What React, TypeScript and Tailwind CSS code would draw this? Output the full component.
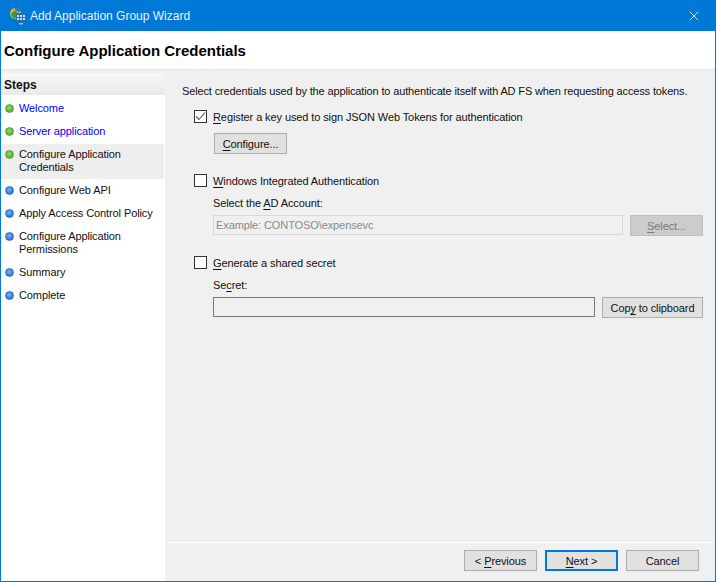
import type { ReactNode } from 'react'
import { X } from 'lucide-react'

const font = "font-['Liberation_Sans',Arial,sans-serif]"

const steps = [
  { label: ['Welcome'], state: 'done', link: true },
  { label: ['Server application'], state: 'done', link: true },
  { label: ['Configure Application', 'Credentials'], state: 'done', active: true },
  { label: ['Configure Web API'], state: 'todo' },
  { label: ['Apply Access Control Policy'], state: 'todo' },
  { label: ['Configure Application', 'Permissions'], state: 'todo' },
  { label: ['Summary'], state: 'todo' },
  { label: ['Complete'], state: 'todo' },
]

function Key({ children }: { children: ReactNode }) {
  return <span className="underline decoration-1 underline-offset-2">{children}</span>
}

function WinButton({
  children,
  className = 'border border-[#adadad] bg-[#e1e1e1] text-[#111]',
  width = 'w-[73px]',
}: {
  children: ReactNode
  className?: string
  width?: string
}) {
  return (
    <button
      type="button"
      className={`flex h-[21px] items-center justify-center pt-[2px] text-[11px] leading-none tracking-[-0.1px] ${width} ${className}`}
    >
      {children}
    </button>
  )
}

function CheckRow({ checked, children }: { checked?: boolean; children: ReactNode }) {
  return (
    <div className="flex h-[13px] items-center gap-[6px] leading-none">
      <span className="flex size-[13px] shrink-0 items-center justify-center border border-[#333] bg-white">
        {checked && (
          <svg width="11" height="11" viewBox="0 0 11 11" fill="none">
            <path d="M1 5.5 L4 8.5 L10 1.5" stroke="#5a5a5a" strokeWidth="1.1" />
          </svg>
        )}
      </span>
      <span className="pt-[2px]">{children}</span>
    </div>
  )
}

function AppIcon() {
  return (
    <svg width="18" height="18" viewBox="0 0 18 18" className="shrink-0">
      <circle cx="6.5" cy="6.5" r="5.5" fill="#e8b53a" />
      <path d="M2 7 Q4 3 7 4 L9 7 L6 12 Q3 11 2 7 Z" fill="#3f9a45" />
      <path d="M6 1 Q10 1 12 4 L9 5 L6 3 Z" fill="#2f6fb5" />
      <rect x="7" y="6" width="10" height="10" fill="#1f70b8" />
      <path d="M8 8h2v2H8zM11 8h2v2h-2zM14 8h2v2h-2zM8 11h2v2H8zM11 11h2v2h-2zM14 11h2v2h-2z" fill="#cfe6f7" />
      <rect x="10" y="16" width="4" height="1.5" fill="#8fbfe0" />
    </svg>
  )
}

function StepDot({ state }: { state: string }) {
  const cls =
    state === 'done'
      ? 'border-[#5aa83c] bg-[radial-gradient(circle_at_45%_40%,#9fdc6e,#4cab2c_70%)]'
      : 'border-[#2f72c9] bg-[radial-gradient(circle_at_45%_40%,#7fb4f2,#2a73dc_70%)]'
  return <span className={`size-[9px] shrink-0 rounded-full border ${cls}`} />
}

export default function App() {
  return (
    <div className={`flex h-[582px] w-[716px] flex-col overflow-hidden border border-t-0 border-[#0078d7] bg-white text-[#111] ${font}`}>
      <header className="flex h-[31px] shrink-0 items-center bg-[#0078d7] pl-2 pr-[13px] text-white">
        <AppIcon />
        <span className="ml-[3px] flex-1 text-[12px] text-[#e8f2fb]">Add Application Group Wizard</span>
        <X className="size-[16px]" strokeWidth={1.2} />
      </header>

      <div className="flex h-[39px] shrink-0 items-center border-b border-[#e4e4e4] pt-[3px] pl-[3px] text-[15px] font-bold text-black">
        Configure Application Credentials
      </div>

      <div className="flex min-h-0 flex-1 bg-[#f0f0f0] pt-[3px]">
        <aside className="w-[164px] shrink-0 bg-white">
          <div className="flex h-[22px] items-center bg-linear-to-b from-[#f7f7f7] to-[#e9e9e9] pt-[2px] pl-[3px] text-[12px] font-bold">
            Steps
          </div>
          <ul className="pt-[2px] pr-[1px] text-[11px] leading-[13px] tracking-[-0.1px]">
            {steps.map((step) => (
              <li
                key={step.label.join(' ')}
                className={`flex gap-[5px] pl-1 ${step.active ? 'bg-[#eeeeee] pt-[4px] pb-[5px] mt-[1px]' : 'py-[5px]'}`}
              >
                <span className="flex h-[13px] items-center">
                  <StepDot state={step.state} />
                </span>
                <span className={step.link ? 'text-[#0000ff]' : 'text-[#111]'}>
                  {step.label.map((line) => (
                    <span key={line} className="block">
                      {line}
                    </span>
                  ))}
                </span>
              </li>
            ))}
          </ul>
        </aside>

        <main className="ml-[3px] flex min-w-0 flex-1 flex-col bg-[#f0f0f0]">
          <div className="min-h-0 flex-1 pl-[14px] pt-[12px] pr-[12px] text-[11px] leading-none tracking-[-0.1px]">
            <p className="flex h-[13px] items-center whitespace-nowrap tracking-[-0.14px]">
              Select credentials used by the application to authenticate itself with AD FS when requesting access tokens.
            </p>

            <div className="mt-[12px] pl-[12px]">
              <CheckRow checked>
                <Key>R</Key>egister a key used to sign JSON Web Tokens for authentication
              </CheckRow>
              <div className="mt-[10px] ml-[20px]">
                <WinButton>
                  <span>
                    <Key>C</Key>onfigure...
                  </span>
                </WinButton>
              </div>

              <div className="mt-[20px]">
                <CheckRow>
                  <Key>W</Key>indows Integrated Authentication
                </CheckRow>
              </div>
              <p className="mt-[10px] ml-[19px] flex h-[13px] items-center">
                <span>
                  Select the <Key>A</Key>D Account:
                </span>
              </p>
              <div className="mt-[5px] ml-[19px] flex gap-[7px]">
                <div className="flex h-[20px] w-[410px] items-center border border-[#d9d9d9] bg-[#f0f0f0] pl-[2px] text-[#8a8a8a]">
                  Example: CONTOSO\expensevc
                </div>
                <WinButton className="border border-[#bfbfbf] bg-[#cccccc] text-[#7a7a7a]">
                  <span>
                    <Key>S</Key>elect...
                  </span>
                </WinButton>
              </div>

              <div className="mt-[20px]">
                <CheckRow>
                  <Key>G</Key>enerate a shared secret
                </CheckRow>
              </div>
              <p className="mt-[10px] ml-[19px] flex h-[13px] items-center">
                <span>
                  Se<Key>c</Key>ret:
                </span>
              </p>
              <div className="mt-[5px] ml-[19px] flex gap-[7px]">
                <div className="h-[20px] w-[382px] border border-[#7a7a7a] bg-[#f0f0f0]" />
                <WinButton width="w-[101px]">
                  <span>
                    Cop<Key>y</Key> to clipboard
                  </span>
                </WinButton>
              </div>
            </div>
          </div>

          <footer className="flex h-[39px] shrink-0 items-start justify-end gap-2 border-t border-white pt-[7px] pr-[16px]">
            <WinButton>
              <span>
                &lt; <Key>P</Key>revious
              </span>
            </WinButton>
            <WinButton className="border-2 border-[#0078d7] bg-[#e1e1e1] text-[#111]">
              <span>
                <Key>N</Key>ext &gt;
              </span>
            </WinButton>
            <WinButton>Cancel</WinButton>
          </footer>
        </main>
      </div>
    </div>
  )
}
